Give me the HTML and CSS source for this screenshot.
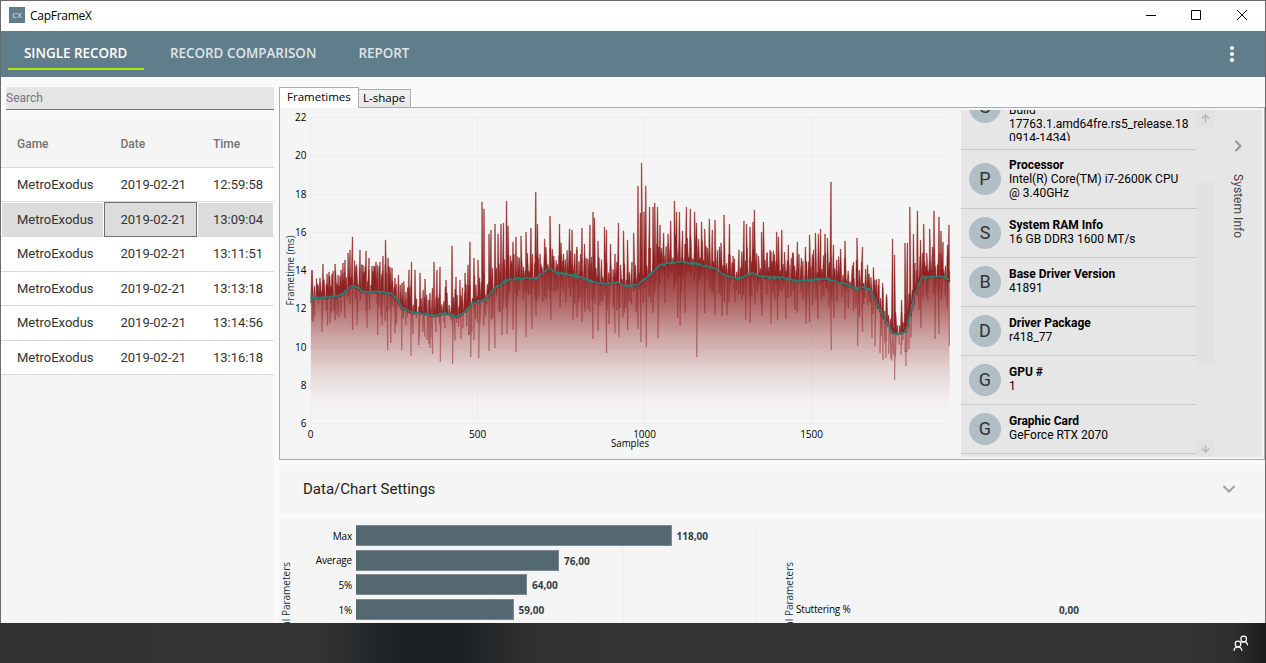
FILE: index.html
```html
<!DOCTYPE html>
<html lang="en">
<head>
    <meta charset="utf-8">
    <title>CapFrameX</title>
    <link rel="stylesheet" href="styles.css">
</head>
<body>
    <div class="window">
        <header class="titlebar">
            <span class="app-icon">CX</span>
            <span class="app-name">CapFrameX</span>
            <svg class="window-buttons" width="120" height="30" viewBox="0 0 120 30">
                <path d="M1 14.5h10M46.500 9.500h9v9h-9zM92 9l10 10M102 9l-10 10" fill="none" stroke="#000"/>
            </svg>
        </header>
        <nav class="navbar">
            <a class="nav-item active">SINGLE RECORD</a>
            <a class="nav-item">RECORD COMPARISON</a>
            <a class="nav-item">REPORT</a>
            <svg class="more" width="6" height="18" viewBox="0 0 6 18">
                <g fill="#fff"><circle cx="3" cy="3" r="2.1"/><circle cx="3" cy="9" r="2.1"/><circle cx="3" cy="15" r="2.1"/></g>
            </svg>
        </nav>
        <main class="content">
            <aside class="records">
                <div class="search">Search</div>
                <div class="table">
                    <div class="row head"><span>Game</span><span>Date</span><span>Time</span></div>
                    <div class="row"><span>MetroExodus</span><span>2019-02-21</span><span>12:59:58</span></div>
                    <div class="row selected"><span>MetroExodus</span><span class="focused">2019-02-21</span><span>13:09:04</span></div>
                    <div class="row"><span>MetroExodus</span><span>2019-02-21</span><span>13:11:51</span></div>
                    <div class="row"><span>MetroExodus</span><span>2019-02-21</span><span>13:13:18</span></div>
                    <div class="row"><span>MetroExodus</span><span>2019-02-21</span><span>13:14:56</span></div>
                    <div class="row"><span>MetroExodus</span><span>2019-02-21</span><span>13:16:18</span></div>
                </div>
            </aside>
            <section class="analysis">
                <div class="tabs">
                    <div class="tab current">Frametimes</div>
                    <div class="tab">L-shape</div>
                </div>
                <div class="panel">
                    <!-- viewBox uses window coordinates so the data below can too -->
                    <svg class="chart" width="681" height="351" viewBox="280 108 681 351">
                        <defs>
                            <linearGradient id="fade" gradientUnits="userSpaceOnUse" x1="0" y1="164" x2="0" y2="424">
                                <stop offset="0" stop-color="#8b1a1a"/>
                                <stop offset="0.36" stop-color="#8b1a1a" stop-opacity="0.95"/>
                                <stop offset="0.52" stop-color="#8b1a1a" stop-opacity="0.68"/>
                                <stop offset="0.65" stop-color="#8b1a1a" stop-opacity="0.4"/>
                                <stop offset="0.8" stop-color="#8b1a1a" stop-opacity="0.14"/>
                                <stop offset="0.92" stop-color="#8b1a1a" stop-opacity="0.015"/>
                                <stop offset="1" stop-color="#8b1a1a" stop-opacity="0"/>
                            </linearGradient>
                        </defs>
                        <g id="grid" stroke="#eeeeee"></g>
                        <path id="area" fill="url(#fade)"/>
                        <path id="drops" fill="none" stroke="#8b1a1a" stroke-width="1.3" stroke-opacity="0.5"/>
                        <path id="spikes" fill="#8b1a1a" fill-opacity="0.9" stroke="#8b1a1a" stroke-width="0.7" stroke-opacity="0.55"/>
                        <path id="average" fill="none" stroke="#2a8073" stroke-width="1.5"/>
                        <g id="labels" class="axis-text"></g>
                        <text class="axis-text" x="611" y="447" textLength="38" lengthAdjust="spacingAndGlyphs">Samples</text>
                        <text class="axis-text axis-blue" transform="translate(293.700 305.500) rotate(-90)" textLength="70" lengthAdjust="spacingAndGlyphs">Frametime (ms)</text>
                    </svg>
                    <div class="system">
                        <div class="info-list">
                            <div class="info cut"><i>S</i><p>Build<br>17763.1.amd64fre.rs5_release.18<br>0914-1434)</p></div>
                            <div class="info"><i>P</i><p class="long"><b>Processor</b><br>Intel(R) Core(TM) i7-2600K CPU<br>@ 3.40GHz</p></div>
                            <div class="info"><i>S</i><p><b>System RAM Info</b><br>16 GB DDR3 1600 MT/s</p></div>
                            <div class="info"><i>B</i><p><b>Base Driver Version</b><br>41891</p></div>
                            <div class="info"><i>D</i><p><b>Driver Package</b><br>r418_77</p></div>
                            <div class="info"><i>G</i><p><b>GPU #</b><br>1</p></div>
                            <div class="info"><i>G</i><p><b>Graphic Card</b><br>GeForce RTX 2070</p></div>
                        </div>
                        <div class="scrollbar">
                            <svg width="17" height="17" viewBox="0 0 17 17"><path d="M8.500 12.500V5M5 8.500L8.500 5 12 8.500" fill="none" stroke="#b4b4b4" stroke-width="1.3"/></svg>
                            <div class="thumb"></div>
                            <svg width="17" height="17" viewBox="0 0 17 17"><path d="M8.500 5V12M5 8.500L8.500 12 12 8.500" fill="none" stroke="#b4b4b4" stroke-width="1.3"/></svg>
                        </div>
                        <div class="side-header">
                            <svg width="10" height="14" viewBox="0 0 10 14"><path d="M2.500 2l5 5-5 5" fill="none" stroke="#949494" stroke-width="2"/></svg>
                            <span>System Info</span>
                        </div>
                    </div>
                </div>
                <div class="settings">
                    <span>Data/Chart Settings</span>
                    <svg width="14" height="10" viewBox="0 0 14 10"><path d="M1.500 2l5.500 5.500L12.500 2" fill="none" stroke="#a0a0a0" stroke-width="2"/></svg>
                </div>
                <div class="stats">
                    <div class="stat-chart">
                        <span class="axis-title">Statistical Parameters</span>
                        <div class="bars">
                            <div class="bar-row"><label>Max</label><div class="bar" style="width: 315.500px"></div><b>118,00</b></div>
                            <div class="bar-row"><label>Average</label><div class="bar" style="width: 203px"></div><b>76,00</b></div>
                            <div class="bar-row"><label>5%</label><div class="bar" style="width: 171px"></div><b>64,00</b></div>
                            <div class="bar-row"><label>1%</label><div class="bar" style="width: 157.500px"></div><b>59,00</b></div>
                        </div>
                    </div>
                    <div class="stat-chart">
                        <span class="axis-title">Statistical Parameters</span>
                        <div class="stutter"><label>Stuttering %</label><b>0,00</b></div>
                    </div>
                </div>
            </section>
        </main>
    </div>
    <footer class="taskbar">
        <svg width="16" height="17" viewBox="0 0 16 17">
            <g fill="none" stroke="#fff" stroke-width="1.25">
                <circle cx="10.700" cy="4" r="2.800"/><circle cx="5" cy="9" r="2.800"/>
                <path d="M1 15.800c.2-2.600 1.700-4 4-4s3.600 1.400 3.900 4M8.600 7.700c.6-.7 1.300-1 2.100-1 2.400 0 3.600 1.300 4 3.600"/>
            </g>
        </svg>
    </footer>
    <script src="chart.js"></script>
</body>
</html>
```
FILE: styles.css
```css
* {
    box-sizing: border-box;
}

body {
    margin: 0;
    width: 1266px;
    height: 663px;
    overflow: hidden;
    font-family: Roboto, "Liberation Sans", sans-serif;
    background-color: #333;
    color: #000;
}

.window {
    height: 623px;
    border: 1px solid #6b6b6b;
    border-bottom: 0;
    background-color: #fafafa;
    display: flex;
    flex-direction: column;
    overflow: hidden;
}

.titlebar {
    height: 30px;
    flex: none;
    display: flex;
    align-items: center;
    padding-left: 8px;
    background-color: #fff;
    font-family: "Open Sans", "Noto Sans", sans-serif;
    font-size: 12px;
}

.app-icon {
    width: 16px;
    height: 16px;
    margin-right: 5px;
    margin-top: -2px;
    background-color: #607d8b;
    color: #e4eaed;
    font-size: 8px;
    line-height: 16px;
    text-align: center;
}

.app-name {
    margin-top: -2px;
    letter-spacing: -0.28px;
}

.window-buttons {
    margin-left: auto;
}

.navbar {
    height: 46px;
    flex: none;
    display: flex;
    align-items: flex-start;
    padding: 0 30px 0 7px;
    background-color: #607d8b;
    font-family: "Open Sans", "Noto Sans", sans-serif;
    font-size: 13.4px;
    font-weight: 600;
}

.nav-item {
    height: 39px;
    padding: 0 16px;
    margin-right: 10px;
    line-height: 45px;
    color: #dfe5e8;
    white-space: nowrap;
}

.nav-item.active {
    width: 136px;
    color: #fff;
    border-bottom: 2px solid #aeea00;
}

.more {
    margin-left: auto;
    align-self: center;
}

.content {
    flex: 1;
    min-height: 0;
    display: flex;
    gap: 5px;
}

.records {
    width: 273px;
    flex: none;
    display: flex;
    flex-direction: column;
    padding-top: 10px;
}

.search {
    height: 23px;
    margin: 0 0 10px 5px;
    background-color: #e5e5e5;
    border-bottom: 1px solid #777;
    color: #757575;
    font-size: 12px;
    line-height: 22px;
}

.table {
    flex: 1;
    background-color: #f5f5f5;
    font-size: 13px;
    color: #333;
}

.row {
    height: 34.6px;
    display: grid;
    grid-template-columns: 103.5px 92.5px 1fr;
    align-items: stretch;
    background-color: #fff;
    border-bottom: 1px solid #dadada;
    line-height: 34px;
}

.row span {
    padding-left: 16px;
}

.row.head {
    height: 47.8px;
    background-color: #f5f5f5;
    color: #737373;
    font-size: 12px;
    font-weight: 500;
    line-height: 48px;
}

.row.selected {
    padding: 0 1px;
    grid-template-columns: 101px 95px 1fr;
}

.row.selected span {
    margin: 1px 0;
    padding-left: 15px;
    line-height: 33px;
    background-color: #dcdcdc;
}

.row.selected .focused {
    margin: 0 1px;
    border: 1px solid #707070;
    padding-left: 15.5px;
}

.analysis {
    width: 986px;
    flex: none;
    display: flex;
    flex-direction: column;
    padding-top: 10px;
}

.tabs {
    height: 21px;
    flex: none;
    display: flex;
    align-items: flex-end;
    font-family: "Open Sans", "Noto Sans", sans-serif;
    font-size: 11.5px;
    position: relative;
}

.tab {
    width: 52px;
    height: 19px;
    border: 1px solid #acacac;
    border-left: 0;
    background: linear-gradient(#f1f1f1, #e6e6e6);
    line-height: 16px;
    padding-left: 4px;
}

.tab.current {
    width: 80px;
    height: 21px;
    border-left: 1px solid #acacac;
    border-bottom: 0;
    background: #fff;
    line-height: 18px;
    padding-left: 7px;
}

.panel {
    height: 353px;
    flex: none;
    margin-top: -1px;
    display: flex;
    border: 1px solid #acacac;
    background-color: #f5f5f5;
}

.chart {
    flex: none;
}

.axis-text {
    font-family: "Open Sans", "Noto Sans", sans-serif;
    font-size: 10px;
}

.axis-blue {
    fill: #12364c;
}

.system {
    width: 301px;
    height: 347px;
    margin-top: 2px;
    display: flex;
    background-color: #e6e6e6;
}

.info-list {
    width: 236px;
    overflow: hidden;
}

.info {
    display: flex;
    align-items: center;
    gap: 8px;
    padding: 8px 0 8px 8px;
    border-bottom: 1px solid #c9c9c9;
    font-size: 12px;
    line-height: 14px;
}

.info i {
    width: 32px;
    height: 32px;
    flex: none;
    border-radius: 50%;
    background-color: #b0bec5;
    color: #333;
    font-size: 18px;
    font-style: normal;
    line-height: 32px;
    text-align: center;
}

.info p {
    margin: 0 0 2px;
    white-space: nowrap;
}

.info .long {
    margin: 0;
}

/* entry scrolled halfway out of the list */
.info.cut {
    height: 40px;
    align-items: flex-start;
    padding-top: 0;
}

.info.cut i {
    margin-top: -19px;
}

.info.cut p {
    height: 38px;
    margin-top: -7px;
    overflow: hidden;
}

.scrollbar {
    width: 17px;
    display: flex;
    flex-direction: column;
    justify-content: space-between;
    background-color: #e6e6e6;
}

.scrollbar svg {
    background-color: #e2e2e2;
}

.thumb {
    height: 182px;
    margin-top: 18px;
    background-color: #e2e2e2;
    margin-bottom: 40px;
}

.side-header {
    flex: 1;
    display: flex;
    flex-direction: column;
    align-items: center;
    padding-top: 29px;
    gap: 21px;
    color: #444;
    font-size: 12.1px;
}

.side-header span {
    writing-mode: vertical-rl;
}

.settings {
    height: 48px;
    flex: none;
    margin: 5px 0;
    padding: 0 29px 0 24px;
    display: flex;
    align-items: center;
    justify-content: space-between;
    background-color: #f5f5f5;
    color: #222;
    font-size: 15px;
}

.stats {
    flex: 1;
    min-height: 0;
    display: flex;
    overflow: hidden;
    background-color: #f5f5f5;
    font-family: "Open Sans", "Noto Sans", sans-serif;
    font-size: 10px;
}

.stat-chart {
    width: 503px;
    flex: none;
    display: flex;
    align-items: flex-start;
}

.axis-title {
    writing-mode: vertical-rl;
    transform: rotate(180deg);
    width: 15px;
    flex: none;
    margin-top: 44px;
    line-height: 14px;
    color: #12364c;
    white-space: nowrap;
}

.bars {
    flex: 1;
    height: 106px;
    margin-top: 5px;
    padding-top: 2px;
    display: flex;
    flex-direction: column;
    gap: 3.7px;
    /* light vertical lines at 50, 100 and 150 */
    background: linear-gradient(#efefef, #efefef) 195px 0 / 1px 100% no-repeat,
        linear-gradient(#efefef, #efefef) 329px 0 / 1px 100% no-repeat,
        linear-gradient(#efefef, #efefef) 462px 0 / 1px 100% no-repeat;
}

.bar-row {
    height: 21px;
    flex: none;
    display: flex;
    align-items: center;
}

.bar-row label {
    width: 58px;
    margin-right: 4px;
    text-align: right;
    letter-spacing: -0.2px;
}

.bar {
    height: 21px;
    background-color: #546872;
    border: 1px solid #7b8a92;
    border-left: 0;
}

.stats b {
    margin-left: 5px;
    margin-top: 1px;
    color: #333f45;
}

.stutter {
    flex: 1;
    height: 106px;
    margin-top: 5px;
    padding-top: 79px;
    display: flex;
    align-items: flex-start;
    background: linear-gradient(#efefef, #efefef) 56px 0 / 1px 100% no-repeat,
        linear-gradient(#efefef, #efefef) 256px 0 / 1px 100% no-repeat,
        linear-gradient(#efefef, #efefef) 456px 0 / 1px 100% no-repeat;
}

.stutter label {
    width: 258px;
    margin-left: -1px;
    letter-spacing: -0.2px;
}

.taskbar {
    height: 40px;
    display: flex;
    align-items: center;
    justify-content: flex-end;
    padding-right: 17px;
    background: linear-gradient(90deg, #303130 0, #333433 320px, #1c2124 400px, #1b2023 455px, #30302f 530px, #333 620px, #353535 1180px, #2e2e2e 1235px, #1c1c1c 1266px);
}
```
FILE: chart.js
```js
// [x, y] of the tallest spikes
const peaks = [[312,270],[317,284],[320,278],[323,264],[327,274],[329,272],[332,274],[335,264],[338,275],[340,276],
    [343,263],[345,260],[348,253],[350,250],[352.5,237],[356,267],[360,250],[363,265],[366,251],[369,258],[372,266],
    [374,266],[376,262],[380,262],[383,256],[385.5,240],[388,258],[390,267],[392,268],[395,278],[402,283],[406,292],
    [409,270],[411.5,262],[415,270],[420,273],[425,279],[430,293],[434,262],[437,270],[440,267],[446,280],[452,246],
    [456,277],[460,280],[465,273],[468,265],[470,242],[474,258],[478,260],[482,202],[484,209],[489,234],[491,230],
    [495,224],[498,234],[501,224],[503.5,223],[506.5,201],[508,226],[513,242],[516,237],[521,236],[526,232],[531,228],
    [535.8,192],[537.5,224],[540,254],[544.7,239],[550,216],[559.5,224],[561,243],[563.5,254],[569.5,229],[572,230],
    [577,247],[582,228],[584.5,244],[590,225],[593,212],[594.5,218],[598,241],[604.5,227],[606.5,230],[610.5,244],
    [615,254],[618.5,223],[623.5,231],[627.5,240],[633.7,233],[638,186],[640.3,213],[641.6,163],[644,212],[645.8,186],
    [649.6,207],[653,207],[654.8,203],[657.5,207],[660,225],[663.7,233],[668,234],[670.7,221],[674.4,201],[676.7,212],
    [679.4,212],[682.6,231],[686.4,207],[690.3,209],[694.6,212],[696.4,223],[701.6,222],[704.7,229],[709.3,219],
    [712.3,230],[715,220],[721,243],[724,215],[729.4,224],[733,256],[739,250],[744,221],[746.4,224],[750,227],[753,222],
    [754.3,210],[761.6,232],[763.4,222],[767,253],[771,252],[773.3,251],[776.7,232],[778.4,237],[781.8,230],[784.5,252],
    [788.3,245],[792.6,253],[797.3,242],[801.4,258],[805.4,247],[809.6,235],[813.6,250],[815.4,233],[818.4,234],
    [820.7,229],[825,234],[827.4,238],[831,182],[833.4,245],[836.7,260],[840.6,249],[845,241],[848.4,275],[853.6,262],
    [857,238],[862.4,247],[865.6,269],[874.4,285],[879,279],[882.7,283],[886.4,297],[892.6,239],[894.5,255],[901.6,300],
    [905,243],[907.4,243],[909.8,207],[913.4,234],[915,263],[917.4,211],[920.5,240],[923.7,224],[926.7,253],[929.7,229],
    [932.6,247],[934,211],[939,217],[941,231],[943,242],[947.5,245],[949,225]];

// [x, y] of the deepest drops
const dips = [[313,322],[322,332],[330,323],[335,320],[339,317],[345,318],[352.6,330],[357,325],[367,328],[377.6,335],
    [382,325],[387.7,350],[390.7,343],[395,333],[401.7,350],[411,356],[418.6,345],[422.6,332],[430,348],[432.6,354],
    [440.3,362],[452.6,364],[455,335],[461,339],[470.7,357],[474,340],[478.7,358],[489,351],[495,348],[502,335],
    [507,334],[513,330],[516,352],[526,337],[532,329],[536,316],[551,320],[560,308],[573,320],[577,317],[582,322],
    [585,312],[590,312],[593,339],[598,331],[606.6,353],[609,324],[615,333],[619,337],[623,317],[627.6,330],[638,329],
    [641,342],[646.3,347],[653,313],[658,338],[665,303],[677.6,318],[680,326],[685,313],[696.7,357],[704.6,313],
    [715,315],[722,316],[727,315],[735,302],[745.7,320],[750,323],[755,305],[762,316],[771,324],[777.6,320],[786,319],
    [797,313],[806,324],[809.6,322],[818,319],[831.3,350],[834,318],[845,319],[857.6,346],[862.6,332],[872,338],
    [875,346],[880,353],[883,360],[886,358],[891,359],[894.6,380],[901,355],[906,366],[909,349],[921,328],[935,339],
    [939,334],[949.3,346]];

const trend = [[311,297],[314,298],[335,297],[343,294],[350,287],[354,286],[365,292],[380,292],[392,294],[403,308],
    [412,313],[421,313],[435,316],[445,313],[457,317],[467,310],[472,303],[485,300],[493,290],[505,281],[512,279],
    [537,278],[549,268],[557,273],[570,275],[582,278],[600,284],[617,283],[628,286],[638,285],[645,279],[660,265],
    [677,262],[697,264],[713,268],[726,276],[738,279],[752,273],[760,277],[783,278],[798,281],[827,279],[847,285],
    [858,289],[863,287],[870,290],[880,310],[892,332],[898,334],[906,331],[915,293],[922,277],[945,277],[949.5,281]];

let seed = 7;
function random() {
    seed = (seed * 16807) % 2147483647;
    return seed / 2147483647;
}

function trendAt(x) {
    for (let i = 1; i < trend.length; i++) {
        if (x <= trend[i][0]) {
            const [x0, y0] = trend[i - 1];
            const [x1, y1] = trend[i];
            return y0 + (y1 - y0) * (x - x0) / (x1 - x0);
        }
    }
    return trend[trend.length - 1][1];
}

const toPath = points => 'M' + points.map(p => p[0].toFixed(2) + ' ' + p[1].toFixed(2)).join('L');

// small jitter between the listed spikes and drops
const ups = peaks.slice();
const downs = dips.slice();
for (let x = 312; x < 949; x += 1.9) {
    ups.push([x + random(), trendAt(x) - 4 - random() * 24]);
    if (random() < 0.8) {
        downs.push([x + random(), trendAt(x) + 5 + random() * 25]);
    }
}

const spikes = ups.map(([x, y]) => {
    const lean = (random() - 0.5) * 1.2;
    return toPath([[x - 1 + lean, trendAt(x) + 1], [x - 0.3, y], [x + 0.3, y], [x + 1 + lean, trendAt(x) + 1]]) + 'Z';
});
document.getElementById('spikes').setAttribute('d', spikes.join(''));

const drops = downs.map(([x, y]) => toPath([[x + (random() - 0.5) * 1.6, trendAt(x)], [x, y]]));
document.getElementById('drops').setAttribute('d', drops.join(''));

const average = [[311, 303], [311.5, 294]];
const base = [];
for (let x = 312; x <= 949.5; x += 0.7) {
    average.push([x, trendAt(x) + (random() - 0.5) * 2.2]);
    base.push([x, trendAt(x)]);
}
document.getElementById('average').setAttribute('d', toPath(average));
document.getElementById('area').setAttribute('d', toPath(base) + 'L950 424L311 424L311 297Z');

let grid = '';
let labels = '';
for (let value = 6; value <= 22; value += 2) {
    const y = 423.5 - (value - 6) * 19.125;
    grid += `<path d="M311 ${Math.floor(y) + 0.5}H950"/>`;
    labels += `<text x="306.500" y="${y + 3.5}" text-anchor="end">${value}</text>`;
}
for (let value = 0; value <= 1500; value += 500) {
    const x = 310.6 + value * 0.334;
    grid += `<path d="M${Math.floor(x) + 0.5} 118V424"/>`;
    labels += `<text x="${x}" y="437.500" text-anchor="middle">${value}</text>`;
}
document.getElementById('grid').innerHTML = grid;
document.getElementById('labels').innerHTML = labels;
```
